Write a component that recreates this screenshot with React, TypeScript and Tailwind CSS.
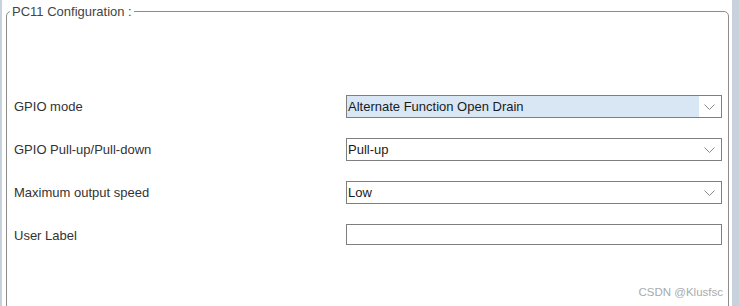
import React from "react";

function Chevron() {
  return (
    <svg width="11" height="6" viewBox="0 0 11 6" className="block">
      <path d="M0.5 0.5 L5.5 5.5 L10.5 0.5" fill="none" stroke="#8a8a8a" strokeWidth="1" />
    </svg>
  );
}

function Select({ value, highlight }: { value: string; highlight?: boolean }) {
  return (
    <div className="flex h-[23px] w-[376px] border border-[#7f7f7f] bg-white">
      <div
        className={
          "flex flex-1 items-center pl-[1px] text-[13px] text-[#1b1b1b] " +
          (highlight ? "bg-[#d9e7f5]" : "bg-white")
        }
      >
        {value}
      </div>
      <div className="flex w-[22px] items-center justify-center pr-[1px]">
        <Chevron />
      </div>
    </div>
  );
}

export default function App() {
  const rows: { label: string; value?: string; highlight?: boolean }[] = [
    { label: "GPIO mode", value: "Alternate Function Open Drain", highlight: true },
    { label: "GPIO Pull-up/Pull-down", value: "Pull-up" },
    { label: "Maximum output speed", value: "Low" },
    { label: "User Label" },
  ];
  return (
    <div
      className="relative flex h-[306px] w-[739px] overflow-hidden bg-white"
      style={{ fontFamily: '"Liberation Sans", Arial, sans-serif' }}
    >
      <div className="w-[2px] shrink-0 bg-[#c8d2dc]" />
      <div className="flex-1 pl-[4px] pr-[3px] pt-[4px]">
        <fieldset className="h-[400px] rounded-t-[5px] border border-[#8c8c8c] pl-[7px]">
          <legend className="ml-[-4px] px-[2px] text-[13px] leading-[15px] text-[#444]">
            PC11 Configuration :
          </legend>
          <div className="mt-[76px] flex flex-col gap-[20px]">
            {rows.map((r) => (
              <div key={r.label} className="flex h-[23px] items-start">
                <div className="flex h-[23px] w-[332px] items-center text-[13px] text-[#333]">
                  {r.label}
                </div>
                {r.value !== undefined ? (
                  <Select value={r.value} highlight={r.highlight} />
                ) : (
                  <div className="h-[21px] w-[376px] border border-[#7f7f7f] bg-white" />
                )}
              </div>
            ))}
          </div>
        </fieldset>
      </div>
      <div className="w-[7px] shrink-0 bg-[#c8d2dc]" />
      <div className="absolute right-[16px] top-[284px] text-[11.5px] text-[#aaaaaa]">
        CSDN @Klusfsc
      </div>
    </div>
  );
}
